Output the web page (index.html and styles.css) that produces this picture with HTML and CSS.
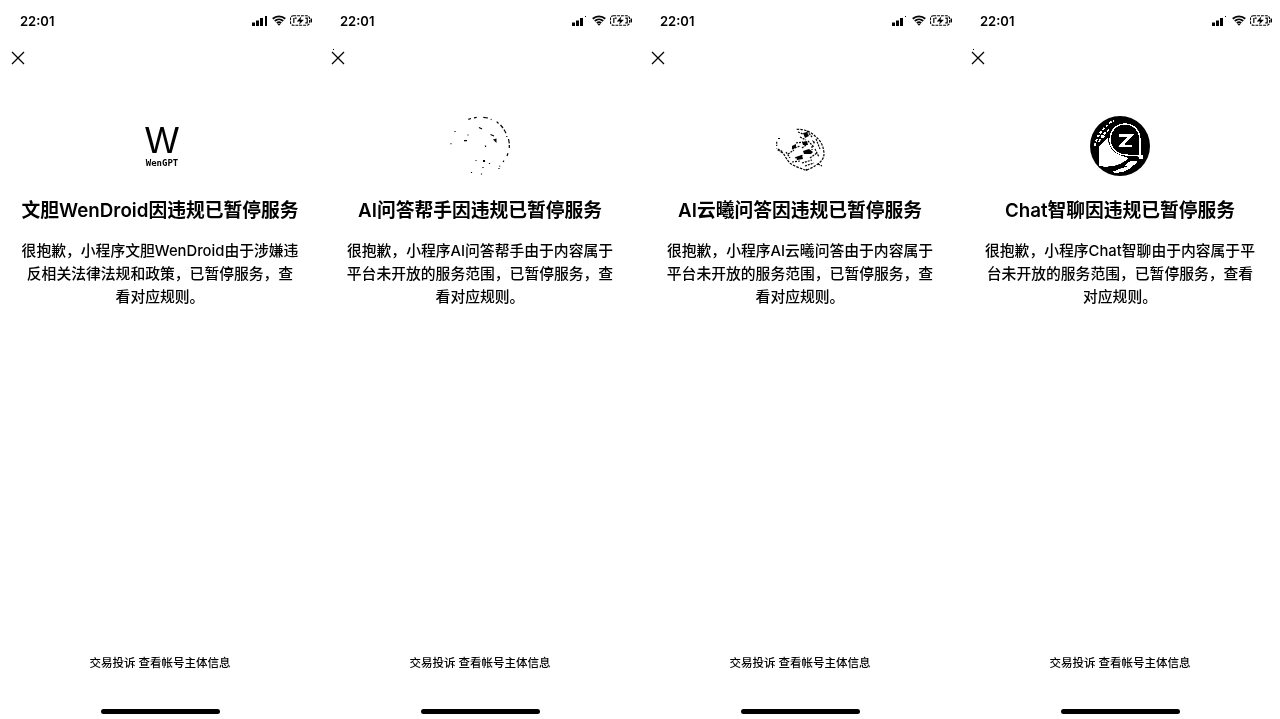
FILE: index.html
```html
<!DOCTYPE html>
<html lang="zh-CN">
<head>
<meta charset="utf-8">
<title>暂停服务</title>
<link rel="stylesheet" href="styles.css">
</head>
<body>
<svg class="defs" width="0" height="0" aria-hidden="true">
  <symbol id="wifi" viewBox="0 0 15 11">
    <path d="M.8 3.600C4.500.2 10.500.2 14.200 3.600M3 6C5.600 3.700 9.400 3.700 12 6M5.200 8.300C6.500 7.200 8.500 7.200 9.800 8.300" fill="none" stroke="#000" stroke-width="2"/>
    <path d="M5.800 9.200L7.500 11 9.200 9.200Z" fill="#000"/>
  </symbol>
  <symbol id="batt" viewBox="0 0 23 11">
    <rect x=".5" y=".5" width="20" height="10" rx="3" fill="none" stroke="#000" stroke-dasharray="3 1" stroke-width="1.200"/>
    <path d="M12 1L7 6.500H10.500L9.500 10 14.500 4.800H11Z" fill="#000"/>
    <path d="M4 3V8M5 3H7M16 3H18V8H16" fill="none" stroke="#000" stroke-width="1.200"/>
    <rect x="21.500" y="3.500" width="1.500" height="4" fill="#000"/>
  </symbol>
  <symbol id="close" viewBox="0 0 14 14">
    <path d="M1 1L13 13M13 1L1 13" fill="none" stroke="#000" stroke-width="1.300"/>
  </symbol>
</svg>
<main class="board">

  <section class="phone">
    <header class="status">
      <span class="time">22:01</span>
      <span class="indicators">
        <svg class="signal" viewBox="0 0 15 10"><path d="M0 6.500H3V10H0ZM4 4.500H7V10H4ZM8 2H11V10H8ZM13 0H15V10H13Z"/></svg>
        <svg class="wifi"><use href="#wifi"/></svg>
        <svg class="batt"><use href="#batt"/></svg>
      </span>
    </header>
    <div class="nav"><svg class="close"><use href="#close"/></svg></div>
    <div class="logo logo-wen"><span class="wen-w">W</span><span class="wen-name">WenGPT</span></div>
    <h1 class="title">文胆WenDroid因违规已暂停服务</h1>
    <p class="desc">很抱歉，小程序文胆WenDroid由于涉嫌违反相关法律法规和政策，已暂停服务，查看对应规则。</p>
    <footer class="foot">交易投诉 查看帐号主体信息</footer>
    <div class="home"></div>
  </section>

  <section class="phone">
    <header class="status">
      <span class="time">22:01</span>
      <span class="indicators">
        <svg class="signal" viewBox="0 0 15 10"><path d="M0 6.500H3V10H0ZM4 4.500H7V10H4ZM8 2H11V10H8ZM13 0H14V1H13Z"/></svg>
        <svg class="wifi"><use href="#wifi"/></svg>
        <svg class="batt"><use href="#batt"/></svg>
      </span>
    </header>
    <div class="nav"><svg class="close"><use href="#close"/><rect x="2" y="-2" width="1" height="1"/></svg></div>
    <div class="logo">
      <svg class="logo-art" viewBox="0 0 60 60">
        <path d="M18.300 3.300L21 2.500M24 1.800L26.700 1.300M33.300 1.300L38 2M40.700 3.300L41.500 3.600M46.700 5.700L48.500 7.500M50.500 9L53 12M54 13.500L56 17.300M56.800 20V21M58.500 23L59.300 27.300M59.300 29V32M58 37.300L57 40M54 44.700L53 46M50 49.700L49.500 50.500" fill="none" stroke="#000" stroke-width="1.200"/>
        <path d="M5 15V16M1 27.300V28.300M17.500 19H18.500M14 24.700H17M29 11.500L32 13M40.500 18.500L44 20M35.500 29.500V31M25.500 44.500H26.500M39.500 47V48M33 51V52M21.500 56V57M31.500 57.500V58.500M49 52V53" fill="none" stroke="#000" stroke-width="1.200"/>
        <path d="M43 23.500L46.500 22.500 46.500 27Z" fill="#000"/>
        <rect x="33" y="44" width="2" height="2" fill="#000"/>
      </svg>
    </div>
    <h1 class="title">AI问答帮手因违规已暂停服务</h1>
    <p class="desc">很抱歉，小程序AI问答帮手由于内容属于平台未开放的服务范围，已暂停服务，查看对应规则。</p>
    <footer class="foot">交易投诉 查看帐号主体信息</footer>
    <div class="home"></div>
  </section>

  <section class="phone">
    <header class="status">
      <span class="time">22:01</span>
      <span class="indicators">
        <svg class="signal" viewBox="0 0 15 10"><path d="M0 6.500H3V10H0ZM4 4.500H7V10H4ZM8 2H11V10H8ZM13 0H14V1H13Z"/></svg>
        <svg class="wifi"><use href="#wifi"/></svg>
        <svg class="batt"><use href="#batt"/></svg>
      </span>
    </header>
    <div class="nav"><svg class="close"><use href="#close"/></svg></div>
    <div class="logo">
      <svg class="logo-art" viewBox="0 0 60 60">
        <path d="M26.700 13.300C33 13 40 15 45 20 50 24 53 29 53.500 34 54.500 38 54 41 52 44 50 47 46.500 49 44 50.500 41 52.500 37 54 35 54 30 52 24 50 20 47.300 17 44 15 40 13.300 37.300 10 35 7 34 6.700 32.300" fill="none" stroke="#000" stroke-width="1.200" stroke-dasharray="2.500 1.200"/>
        <path d="M6.700 25.700V30M8 33L13 36M8 22.500H11M28 16L33 18M30 21L36 24M37 15L42 21M26 27L33 26M38 25L44 31M46 23L50 33M22 33L30 30M18 38L24 34M32 32L36 29M45 33L49 41M40 42L47 37M25 42L33 39M22 46L30 45M32 47L42 44M35 50L44 47M36 53L37 55M48 48L52 50M16 36L20 42M42 30L42 34" fill="none" stroke="#000" stroke-width="1.200" stroke-dasharray="2 1"/>
        <path d="M33 17L37 16 39 20 35 22ZM32 26L37 25 38 29 33 29ZM33 35L39 33 43 36 41 38 34 38ZM26 41L32 39 33 43 27 44ZM22 30L26 28 26 32 22 33ZM42 24L45 26 44 28Z" fill="#000"/>
      </svg>
    </div>
    <h1 class="title">AI云曦问答因违规已暂停服务</h1>
    <p class="desc">很抱歉，小程序AI云曦问答由于内容属于平台未开放的服务范围，已暂停服务，查看对应规则。</p>
    <footer class="foot">交易投诉 查看帐号主体信息</footer>
    <div class="home"></div>
  </section>

  <section class="phone">
    <header class="status">
      <span class="time">22:01</span>
      <span class="indicators">
        <svg class="signal" viewBox="0 0 15 10"><path d="M0 6.500H3V10H0ZM4 4.500H7V10H4ZM8 2H11V10H8ZM13 0H14V1H13Z"/></svg>
        <svg class="wifi"><use href="#wifi"/></svg>
        <svg class="batt"><use href="#batt"/></svg>
      </span>
    </header>
    <div class="nav"><svg class="close"><use href="#close"/><rect x="2" y="-2" width="1" height="1"/></svg></div>
    <div class="logo">
      <svg class="logo-art" viewBox="0 0 60 60">
        <circle cx="30" cy="30" r="30" fill="#000"/>
        <path d="M9 50V31C11 28 14 25 18 22 18 31 24 38 33 40 37 41 39 42 37 44 33 46 29 49 24 50 18 51 13 51 9 50Z" fill="#fff"/>
        <path d="M5 30C6 22 11 14 18 9M9 26C11 20 15 16 20 13M13 22L16 17M19 7L24 5" fill="none" stroke="#fff" stroke-width="2" stroke-dasharray="3 1.500"/>
        <path d="M35 8C44 8 50 15 50 24 50 31 50 36 50 40 46 39 41 40 36 39 27 38 20 32 20 24 20 15 26 8 35 8Z" fill="#000" stroke="#fff" stroke-width="1.600"/>
        <circle cx="35" cy="24.500" r="13" fill="#000" stroke="#000"/>
        <path d="M29 19.500H41L31 30H42" fill="none" stroke="#fff" stroke-width="3"/>
        <path d="M27 18V23M43 30V33" fill="none" stroke="#fff"/>
        <circle cx="51" cy="41" r="2.500" fill="#fff"/>
        <path d="M21 56C28 54 34 51 37 47 41 44 45 44 48 45 44 50 38 54 33 56 29 57 24 57 21 56Z" fill="#fff"/>
        <path d="M26 53L37 50" fill="none" stroke="#000"/>
      </svg>
    </div>
    <h1 class="title">Chat智聊因违规已暂停服务</h1>
    <p class="desc">很抱歉，小程序Chat智聊由于内容属于平台未开放的服务范围，已暂停服务，查看对应规则。</p>
    <footer class="foot">交易投诉 查看帐号主体信息</footer>
    <div class="home"></div>
  </section>

</main>
</body>
</html>
```
FILE: styles.css
```css
* { box-sizing: border-box; }
html, body { margin: 0; height: 100%; background: #fff; overflow: hidden; }
body { font-family: Inter, "Noto Sans CJK SC", sans-serif; color: #000; }
.defs { position: absolute; }
.board { display: grid; grid-template-columns: repeat(4, 320px); height: 719px; filter: grayscale(1) brightness(.85) contrast(30); }
.phone { display: flex; flex-direction: column; align-items: center; height: 719px; }
.status { align-self: stretch; height: 41px; display: flex; justify-content: space-between; align-items: center; padding: 0 8px 0 20px; }
.time { font-size: 13px; font-weight: 600; }
.indicators { display: flex; align-items: center; gap: 4px; }
.signal { width: 15px; height: 10px; margin-right: 1px; fill: #000; }
.wifi { width: 14px; height: 11px; }
.batt { width: 22px; height: 11px; }
.nav { align-self: stretch; height: 34px; display: flex; align-items: center; padding-left: 11px; }
.close { width: 14px; height: 14px; overflow: visible; }
.logo { width: 60px; height: 60px; margin-top: 41px; display: flex; flex-direction: column; align-items: center; }
.logo-wen { padding-left: 4px; }
.logo-art { width: 60px; height: 60px; display: block; }
.wen-w { font-family: "Liberation Sans", sans-serif; font-size: 36px; line-height: 30px; margin-top: 10px; }
.wen-name { font-family: "DejaVu Sans Mono", monospace; font-weight: 700; font-size: 9px; line-height: 10px; margin-top: 2px; }
.title { margin: 21px 0 0; font-size: 18.750px; line-height: 28px; font-weight: 600; text-align: center; white-space: nowrap; }
.desc { margin: 15px 0 0; width: 278px; font-size: 14.800px; font-weight: 500; line-height: 23px; text-align: center; }
.foot { margin-top: auto; font-size: 11.500px; font-weight: 500; line-height: 16px; text-align: center; }
.home { width: 119px; height: 5px; margin: 38px 0 5px; border-radius: 3px; background: #000; }
```
